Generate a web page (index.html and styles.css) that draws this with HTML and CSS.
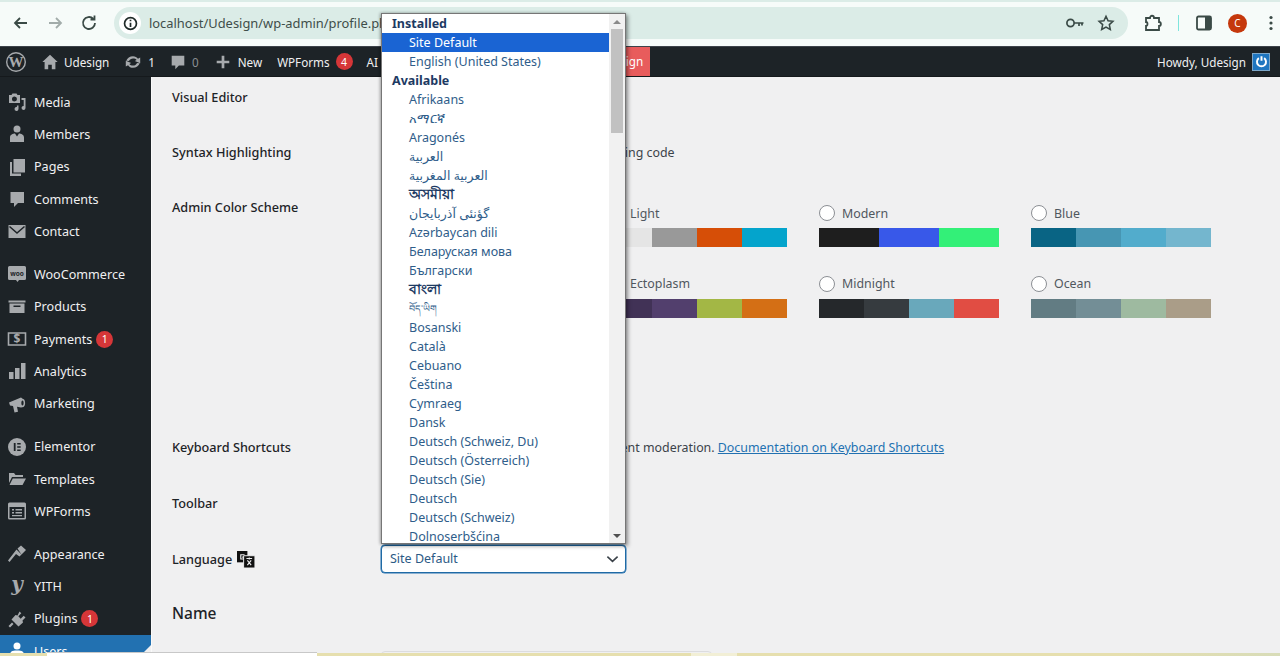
FILE: index.html
```html
<!DOCTYPE html>
<html lang="en">
<head>
<meta charset="utf-8">
<title>Profile</title>
<link rel="stylesheet" href="styles.css">
</head>
<body>
<div class="app">
  <header class="chrome">
    <div class="tabline"></div>
    <div class="toolbar">
      <svg class="nav" viewBox="0 0 20 20"><path d="M16 10H4M9 5l-5 5 5 5"/></svg>
      <svg class="nav nav-off" viewBox="0 0 20 20"><path d="M4 10h12M11 5l5 5-5 5"/></svg>
      <svg class="nav" viewBox="0 0 20 20"><path d="M16 10a6 6 0 1 1-1.8-4.3M15.5 2.5v4h-4"/></svg>
      <div class="omnibox">
        <span class="infochip"><svg viewBox="0 0 20 20"><circle cx="10" cy="10" r="7"/><path d="M10 9.2v5M10 5.6v1.8"/></svg></span>
        <span class="url">localhost/Udesign/wp-admin/profile.php?wp_http_referer</span>
        <svg class="omni-ic key" viewBox="0 0 20 20"><circle cx="5.5" cy="10" r="3.6"/><path d="M9 10h9.5M14 10v3M17 10v2.5"/></svg>
        <svg class="omni-ic star" viewBox="0 0 20 20"><path d="M10 2.5l2.3 5 5.4.6-4 3.7 1.1 5.4-4.800-2.700-4.800 2.700 1.100-5.400-4-3.700 5.400-.6z"/></svg>
      </div>
      <svg class="tool puzzle" viewBox="0 0 20 20"><path d="M3 5h4c0-3 4-3 4 0h5v4c2.500 0 2.500 4 0 4v4H3v-4c0 0 1.500 0 1.500-2S3 9 3 9z"/></svg>
      <span class="divider"></span>
      <svg class="tool panel" viewBox="0 0 20 20"><rect x="3" y="3.500" width="14" height="13" rx="1.500"/><path class="panel-fill" d="M11 3.500h6v13h-6z"/></svg>
      <span class="avatar">C</span>
      <svg class="tool dots" viewBox="0 0 6 20"><circle cx="3" cy="4.500" r="1.600"/><circle cx="3" cy="10" r="1.600"/><circle cx="3" cy="15.500" r="1.600"/></svg>
    </div>
  </header>

  <nav class="adminbar">
    <svg class="ab-wp" viewBox="0 0 20 20"><circle cx="10" cy="10" r="10"/><circle class="ab-wp-ring" cx="10" cy="10" r="8.600"/><text x="10" y="15" text-anchor="middle">W</text></svg>
    <svg class="ab-ic ab-home" viewBox="0 0 20 20"><path d="M10 2l8.500 8H16v8h-4v-5H8v5H4v-8H1.500z"/></svg>
    <span class="ab-text ab-site">Udesign</span>
    <svg class="ab-ic ab-upd" viewBox="0 0 20 20"><path d="M10 3.500c2.400 0 4.400 1.200 5.500 3l2.500-1.500v6.500l-6-2.500 2-1.200C13.300 6.500 11.800 6 10 6 8 6 6.300 7.200 5.500 9L2.500 8.500C3.600 5.500 6.500 3.500 10 3.500zM10 16.500c-2.400 0-4.400-1.200-5.500-3L2 15V8.500l6 2.500-2 1.200c.7 1.300 2.200 1.800 4 1.800 2 0 3.700-1.200 4.500-3l3 .5c-1.100 3-4 5-7.500 5z"/></svg>
    <span class="ab-text ab-num">1</span>
    <svg class="ab-ic ab-cmt" viewBox="0 0 20 20"><path d="M3 3h14v11h-6l-4 4v-4H3z"/></svg>
    <span class="ab-text ab-zero">0</span>
    <svg class="ab-ic ab-plus" viewBox="0 0 20 20"><path d="M8.500 3h3v5.500H17v3h-5.500V17h-3v-5.500H3v-3h5.500z"/></svg>
    <span class="ab-text ab-new">New</span>
    <span class="ab-text ab-forms">WPForms</span>
    <span class="badge ab-badge">4</span>
    <span class="ab-text ab-ai">AI Engine</span>
    <span class="ab-text ab-red">Udesign</span>
    <span class="ab-text ab-howdy">Howdy, Udesign</span>
    <span class="ab-power"><svg viewBox="0 0 20 20"><path d="M6.500 5.500a6 6 0 1 0 7 0M10 3v6"/></svg></span>
  </nav>

  <div class="workspace">
    <aside class="sidebar">
      <a class="item"><svg class="ic" viewBox="0 0 20 20"><path fill-rule="evenodd" d="M2 3h2.500l1-1.500h4L10.500 3H13v8H2zM7.500 4.500a2.500 2.500 0 1 0 0 5 2.500 2.500 0 0 0 0-5z"/><path d="M18.500 6v10a2 2 0 1 1-1.800-2V8H14.500V6zM11.500 13.500v3.500a2 2 0 1 1-1.600-2v-1.500z"/></svg>Media</a>
      <a class="item"><svg class="ic" viewBox="0 0 20 20"><circle cx="10" cy="5" r="3.500"/><path d="M3 18v-4.500C3 10.500 6 9.500 8 9.500l2 3 2-3c2 0 5 1 5 4V18z"/></svg>Members</a>
      <a class="item"><svg class="ic" viewBox="0 0 20 20"><path d="M6.500 2H18v13.500H6.500zM3 5h2v11.500h9V19H3z"/></svg>Pages</a>
      <a class="item"><svg class="ic" viewBox="0 0 20 20"><path d="M3.500 3h13.500v11h-6l-4 4v-4H3.500z"/></svg>Comments</a>
      <a class="item"><svg class="ic" viewBox="0 0 20 20"><path d="M1.500 4h17v13h-17z"/><path class="ic-cut" d="M2.500 5.500L10 12l7.500-6.500"/></svg>Contact</a>

      <a class="item sep"><svg class="ic" viewBox="0 0 20 20"><path d="M2.500 2h15A1.500 1.500 0 0 1 19 3.500v11a1.500 1.500 0 0 1-1.500 1.500H12l-1.500 2-1.500-2H2.500A1.500 1.500 0 0 1 1 14.500v-11A1.500 1.500 0 0 1 2.500 2z"/><text class="ic-woo" x="10" y="11.500" text-anchor="middle">woo</text></svg>WooCommerce</a>
      <a class="item"><svg class="ic" viewBox="0 0 20 20"><path d="M1.500 3.500h17v2h-17z"/><path fill-rule="evenodd" d="M2.500 6.500h15V16h-15zM6.500 8.500v1.500h7V8.500z"/></svg>Products</a>
      <a class="item"><svg class="ic" viewBox="0 0 20 20"><path class="ic-line" d="M1.500 4h17v12h-17z"/><text class="ic-dollar" x="10" y="14" text-anchor="middle">$</text></svg>Payments<span class="badge">1</span></a>
      <a class="item"><svg class="ic" viewBox="0 0 20 20"><path d="M2 11h4.500v7H2zM8 7h4.500v11H8zM14 2h4.500v16H14z"/></svg>Analytics</a>
      <a class="item"><svg class="ic" viewBox="0 0 20 20"><path fill-rule="evenodd" d="M2 8.500L14 3.500l2 1.500c2.500 0 3 7 .5 8L14 13.500l-4 -.7 1 5-3.500.7L6 12l-3-.5zM15.500 6.500c-1.500 0-1.500 5 0 5s1.500-5 0-5z"/></svg>Marketing</a>

      <a class="item sep"><svg class="ic" viewBox="0 0 20 20"><circle cx="10" cy="10" r="9"/><path class="ic-dark" d="M6.800 6h1.800v8H6.800zM10.200 6h3.500v1.600h-3.500zM10.200 9.200h3.500v1.600h-3.500zM10.200 12.400h3.500V14h-3.500z"/></svg>Elementor</a>
      <a class="item"><svg class="ic" viewBox="0 0 20 20"><path d="M2 4h5l1.500 2H16v2H5l-3 6zM5.800 9.500H19L15.500 16H2.500z"/></svg>Templates</a>
      <a class="item"><svg class="ic" viewBox="0 0 20 20"><path fill-rule="evenodd" d="M2.500 1.500h15a1.500 1.500 0 0 1 1.500 1.500v14a1.500 1.500 0 0 1-1.500 1.500h-15A1.500 1.500 0 0 1 1 17V3a1.500 1.500 0 0 1 1.500-1.500zM2.500 6v11h15V6zM5 8h2v1.500H5zM8.500 8H15v1.500H8.500zM5 11h2v1.500H5zM8.500 11H15v1.500H8.500zM5 14h10v1.200H5z"/></svg>WPForms</a>

      <a class="item sep"><svg class="ic" viewBox="0 0 20 20"><path d="M10.500 4.500L14 1.500l5 4.500-4.500 4.500zM9.500 5.500l5 5-2 2L9 10l-6.500 8L1 16.500z"/></svg>Appearance</a>
      <a class="item"><svg class="ic" viewBox="0 0 20 20"><text class="ic-yith" x="10" y="14" text-anchor="middle">y</text></svg>YITH</a>
      <a class="item"><svg class="ic" viewBox="0 0 20 20"><path d="M12.500 2.500l1.800 1.800-3 3 2.400 2.400 3-3 1.800 1.800-3 3 .5 2-4.500 4-7-7 4-4.500 2 .5zM5 13.500l1.500 1.500L3 18.500 1.500 17z"/></svg>Plugins<span class="badge">1</span></a>
      <a class="item item-current"><svg class="ic" viewBox="0 0 20 20"><circle cx="10" cy="5" r="3.500"/><path d="M3 18v-4.500C3 10.500 6 9.500 8 9.500h4c2 0 5 1 5 4V18z"/></svg>Users<i class="notch"></i></a>
    </aside>

    <main class="content">
      <div class="row row-editor">
        <div class="label">Visual Editor</div>
        <label class="check"><span class="box"></span>Disable the visual editor when writing</label>
      </div>
      <div class="row row-syntax">
        <div class="label">Syntax Highlighting</div>
        <label class="check"><span class="box"></span>Disable syntax highlighting when editing code</label>
      </div>
      <div class="row row-scheme">
        <div class="label">Admin Color Scheme</div>
        <div class="schemes">
          <div class="scheme"><div class="scheme-name"><span class="radio"></span>Default</div><div class="swatches"><i class="s-1d2327"></i><i class="s-2c3338"></i><i class="s-2271b1"></i><i class="s-72aee6"></i></div></div>
          <div class="scheme"><div class="scheme-name"><span class="radio"></span>Light</div><div class="swatches"><i class="s-e5e5e5"></i><i class="s-999"></i><i class="s-d64e07"></i><i class="s-04a4cc"></i></div></div>
          <div class="scheme"><div class="scheme-name"><span class="radio"></span>Modern</div><div class="swatches"><i class="s-1e1e1e"></i><i class="s-3858e9"></i><i class="s-33f078"></i></div></div>
          <div class="scheme"><div class="scheme-name"><span class="radio"></span>Blue</div><div class="swatches"><i class="s-096484"></i><i class="s-4796b3"></i><i class="s-52accc"></i><i class="s-74b6ce"></i></div></div>
          <div class="scheme"><div class="scheme-name"><span class="radio"></span>Coffee</div><div class="swatches"><i class="s-46403c"></i><i class="s-59524c"></i><i class="s-c7a589"></i><i class="s-9ea476"></i></div></div>
          <div class="scheme"><div class="scheme-name"><span class="radio"></span>Ectoplasm</div><div class="swatches"><i class="s-413256"></i><i class="s-523f6d"></i><i class="s-a3b745"></i><i class="s-d46f15"></i></div></div>
          <div class="scheme"><div class="scheme-name"><span class="radio"></span>Midnight</div><div class="swatches"><i class="s-25282b"></i><i class="s-363b3f"></i><i class="s-69a8bb"></i><i class="s-e14d43"></i></div></div>
          <div class="scheme"><div class="scheme-name"><span class="radio"></span>Ocean</div><div class="swatches"><i class="s-627c83"></i><i class="s-738e96"></i><i class="s-9ebaa0"></i><i class="s-aa9d88"></i></div></div>
        </div>
      </div>
      <div class="row row-keys">
        <div class="label">Keyboard Shortcuts</div>
        <label class="check"><span class="box"></span>Enable keyboard shortcuts for comment moderation.&nbsp;<a class="doc">Documentation on Keyboard Shortcuts</a></label>
      </div>
      <div class="row row-toolbar">
        <div class="label">Toolbar</div>
        <label class="check"><span class="box"></span>Show Toolbar when viewing site</label>
      </div>
      <div class="row row-lang">
        <div class="label label-lang">Language
          <svg class="lang-ic" viewBox="0 0 20 18"><path d="M1 0h11v12H1z"/><path class="lang-cut" d="M9 4H5v4.500h3V6.500H6.500"/><path d="M8 5h12v13H8z" class="lang-back"/><path class="lang-cut" d="M11 8h6M14 7v2M12 15l4-5M16 15l-4-5"/></svg>
        </div>
        <div class="select-wrap">
          <div class="listbox">
            <ul class="options">
              <li class="group">Installed</li>
              <li class="selected">Site Default</li>
              <li>English (United States)</li>
              <li class="group">Available</li>
              <li>Afrikaans</li>
              <li>አማርኛ</li>
              <li>Aragonés</li>
              <li>العربية</li>
              <li>العربية المغربية</li>
              <li class="script-dark">অসমীয়া</li>
              <li>گؤنئی آذربایجان</li>
              <li>Azərbaycan dili</li>
              <li>Беларуская мова</li>
              <li>Български</li>
              <li class="script-dark">বাংলা</li>
              <li class="script-small">བོད་ཡིག</li>
              <li>Bosanski</li>
              <li>Català</li>
              <li>Cebuano</li>
              <li>Čeština</li>
              <li>Cymraeg</li>
              <li>Dansk</li>
              <li>Deutsch (Schweiz, Du)</li>
              <li>Deutsch (Österreich)</li>
              <li>Deutsch (Sie)</li>
              <li>Deutsch</li>
              <li>Deutsch (Schweiz)</li>
              <li>Dolnoserbšćina</li>
            </ul>
            <div class="scrollbar">
              <span class="arrow-up"></span>
              <span class="thumb"></span>
              <span class="arrow-down"></span>
            </div>
          </div>
          <div class="select">Site Default
            <svg viewBox="0 0 14 8"><path d="M1.500 1.500L7 6.500l5.500-5"/></svg>
          </div>
        </div>
      </div>
      <h2 class="section">Name</h2>
      <div class="row row-input">
        <div class="label"></div>
        <div class="text-input"></div>
      </div>
    </main>
  </div>

  <footer class="strip">
    <span class="strip-a"></span><span class="strip-b"></span><span class="strip-c"></span><span class="strip-d"></span><span class="strip-e"></span>
  </footer>
</div>
</body>
</html>
```
FILE: styles.css
```css
* { box-sizing: border-box; }
html, body { margin: 0; padding: 0; height: 100%; overflow: hidden; }
body { font-family: "Noto Sans", "DejaVu Sans", "Liberation Sans", sans-serif; font-size: 13px; color: #1d2327; background: #f0f0f1; }
.app { width: 1280px; height: 656px; display: flex; flex-direction: column; position: relative; overflow: hidden; }

/* Browser chrome */
.chrome { height: 46px; flex: none; background: #f6fbf9; }
.tabline { height: 2px; background: #dbece7; }
.toolbar { height: 44px; display: flex; align-items: center; padding: 0 0 2px 11px; }
.nav { width: 20px; height: 20px; margin-right: 14px; fill: none; stroke: #3a4a46; stroke-width: 1.8; }
.nav-off { stroke: #a2acaa; }
.omnibox { width: 1014px; height: 32px; margin-left: 1px; border-radius: 16px; background: #dbece7; display: flex; align-items: center; padding-left: 5px; }
.infochip { width: 22px; height: 22px; border-radius: 50%; background: #fff; display: flex; align-items: center; justify-content: center; flex: none; }
.infochip svg { width: 17px; height: 17px; fill: none; stroke: #1f2a28; stroke-width: 2; }
.url { flex: 1; margin-left: 8px; font-size: 12.900px; color: #3f4e4a; white-space: nowrap; overflow: hidden; }
.omni-ic { flex: none; fill: none; stroke: #3a4a46; stroke-width: 1.7; }
.key { width: 20px; height: 20px; margin-left: 12px; }
.star { width: 18px; height: 18px; margin-left: 12px; margin-right: 13px; }
.tool { flex: none; }
.puzzle { width: 20px; height: 20px; margin-left: 15px; fill: none; stroke: #3a4a46; stroke-width: 1.800; }
.divider { width: 1px; height: 16px; margin-left: 15px; background: #7fe5dd; }
.panel { width: 20px; height: 20px; margin-left: 15px; fill: none; stroke: #3a4a46; stroke-width: 1.800; }
.panel-fill { fill: #3a4a46; stroke: none; }
.avatar { width: 19px; height: 19px; margin-left: 14px; border-radius: 50%; background: #c5380c; color: #fff; font-size: 10px; display: flex; align-items: center; justify-content: center; }
.dots { width: 6px; height: 20px; margin-left: 21px; fill: #3a4a46; }

/* Admin bar */
.adminbar { height: 31px; flex: none; background: #1d2327; border-top: 1px solid #3c434a; border-bottom: 1px solid #15191c; display: flex; align-items: center; color: #f0f0f1; }
.ab-text { white-space: nowrap; font-size: 11.700px; color: #f0f0f1; }
.ab-ic { width: 18px; height: 18px; fill: #a7aaad; flex: none; }
.ab-wp { width: 20px; height: 20px; margin-left: 6px; fill: #a7aaad; flex: none; }
.ab-wp-ring { fill: #1d2327; }
.ab-wp text { font-family: "Liberation Serif", serif; font-weight: 700; font-size: 15px; fill: #a7aaad; }
.ab-home { margin-left: 15px; }
.ab-site { margin-left: 5px; }
.ab-upd { margin-left: 15px; }
.ab-num { margin-left: 6px; }
.ab-cmt { margin-left: 14px; }
.ab-zero { margin-left: 5px; color: #8c8f94; }
.ab-plus { margin-left: 15px; }
.ab-new { margin-left: 6px; }
.ab-forms { margin-left: 15px; }
.badge { min-width: 17px; height: 17px; margin-left: 4px; border-radius: 50%; background: #d63638; color: #fff; font-size: 10.500px; display: inline-flex; align-items: center; justify-content: center; flex: none; }
.ab-badge { margin-left: 6px; }
.ab-ai { margin-left: 14px; }
.ab-red { margin-left: 172px; padding: 0 7px; height: 29px; line-height: 29px; background: #e85c5c; color: #fff; }
.ab-howdy { margin-left: auto; }
.ab-power { width: 18px; height: 18px; margin: 0 10px 0 6px; background: #1f76c0; border: 1px solid #7da7c9; display: flex; align-items: center; justify-content: center; }
.ab-power svg { width: 15px; height: 15px; fill: none; stroke: #fff; stroke-width: 2.600; }

/* Layout */
.workspace { flex: 1; display: flex; min-height: 0; }
.sidebar { width: 151px; flex: none; background: #1d2327; padding-top: 9px; overflow: hidden; }
.item { height: 32.300px; display: flex; align-items: center; padding-left: 7px; color: #f0f0f1; font-size: 12.600px; white-space: nowrap; position: relative; }
.sep { margin-top: 10.800px; }
.ic { width: 20px; height: 20px; margin-right: 7px; fill: #a7aaad; flex: none; }
.ic-cut { fill: none; stroke: #1d2327; stroke-width: 1.500; }
.ic-dark { fill: #1d2327; }
.ic-line { fill: none; stroke: #a7aaad; stroke-width: 1.600; }
.ic-woo { font-size: 6.500px; font-weight: 700; fill: #1d2327; }
.ic-dollar { font-size: 12px; font-weight: 700; fill: #a7aaad; }
.ic-yith { font-family: "DejaVu Serif", serif; font-style: italic; font-weight: 700; font-size: 20px; fill: #a7aaad; }
.item-current { background: #2271b1; color: #fff; }
.item-current .ic { fill: #fff; }
.notch { position: absolute; right: 0; top: 10px; border: 7px solid transparent; border-right-color: #f0f0f1; border-left-width: 0; border-right-width: 7px; }

/* Content */
.content { flex: 1; padding: 10px 0 0 20px; border-left: 1px solid #fafafa; min-width: 0; }
.row { display: grid; grid-template-columns: 209px 1fr; align-items: start; }
.label { font-weight: 500; font-size: 12.700px; line-height: 20px; color: #1d2327; }
.check { display: flex; align-items: center; padding-top: 1px; line-height: 20px; font-size: 12.400px; color: #3c434a; white-space: nowrap; }
.box { width: 16px; height: 16px; margin-right: 9px; background: #fff; border: 1px solid #8c8f94; border-radius: 3px; flex: none; }
.doc { color: #2271b1; text-decoration: underline; }
.row-editor { height: 55px; }
.row-syntax { height: 55px; }
.row-scheme { height: 240px; }
.row-keys { height: 56px; }
.row-toolbar { height: 52px; }

.schemes { display: grid; grid-template-columns: repeat(4, 180px); column-gap: 32px; padding: 6px 0 0 14px; grid-auto-rows: 70.500px; }
.scheme-name { display: flex; align-items: center; height: 20px; font-size: 12.400px; color: #50575e; margin-bottom: 5px; }
.radio { width: 16px; height: 16px; margin-right: 7px; border-radius: 50%; background: #fff; border: 1px solid #8c8f94; flex: none; }
.swatches { display: flex; height: 19px; }
.swatches i { flex: 1; display: block; }
.s-1d2327 { background: #1d2327; } .s-2c3338 { background: #2c3338; } .s-2271b1 { background: #2271b1; } .s-72aee6 { background: #72aee6; }
.s-e5e5e5 { background: #e5e5e5; } .s-999 { background: #999; } .s-d64e07 { background: #d64e07; } .s-04a4cc { background: #04a4cc; }
.s-1e1e1e { background: #1e1e1e; } .s-3858e9 { background: #3858e9; } .s-33f078 { background: #33f078; }
.s-096484 { background: #096484; } .s-4796b3 { background: #4796b3; } .s-52accc { background: #52accc; } .s-74b6ce { background: #74b6ce; }
.s-46403c { background: #46403c; } .s-59524c { background: #59524c; } .s-c7a589 { background: #c7a589; } .s-9ea476 { background: #9ea476; }
.s-413256 { background: #413256; } .s-523f6d { background: #523f6d; } .s-a3b745 { background: #a3b745; } .s-d46f15 { background: #d46f15; }
.s-25282b { background: #25282b; } .s-363b3f { background: #363b3f; } .s-69a8bb { background: #69a8bb; } .s-e14d43 { background: #e14d43; }
.s-627c83 { background: #627c83; } .s-738e96 { background: #738e96; } .s-9ebaa0 { background: #9ebaa0; } .s-aa9d88 { background: #aa9d88; }

/* Language select */
.row-lang { align-items: center; height: 28px; }
.label-lang { display: flex; align-items: center; gap: 4px; }
.lang-ic { width: 19px; height: 17px; fill: #111; }
.lang-back { fill: #111; stroke: #f0f0f1; stroke-width: 1; }
.lang-cut { fill: none; stroke: #f0f0f1; stroke-width: 1.200; }
.select-wrap { position: relative; width: 245px; }
.select { height: 28px; background: #fff; border: 1.500px solid #1f6aa5; border-radius: 4px; box-shadow: 0 0 0 .5px #2271b1; padding-left: 8px; line-height: 25px; font-size: 12.500px; color: #2c5a85; position: relative; }
.select svg { position: absolute; right: 6px; top: 9px; width: 13px; height: 8px; fill: none; stroke: #3a4148; stroke-width: 1.700; }
.listbox { position: absolute; left: 0; bottom: 100%; margin-bottom: 1px; width: 245px; height: 531px; background: #fff; border: 1px solid #767676; box-shadow: 2px 2px 4px rgba(0, 0, 0, .4), -1px 0 3px rgba(0, 0, 0, .3); display: flex; overflow: hidden; z-index: 5; }
.options { list-style: none; margin: 0; padding: 0; width: 227px; flex: none; overflow: hidden; }
.options li { height: 19px; line-height: 19px; padding-left: 27px; font-size: 12.500px; color: #2f5d8a; white-space: nowrap; text-align: left; overflow: hidden; }
.options .group { padding-left: 10px; font-weight: 700; color: #1d3a63; }
.options .selected { background: #1a64d3; color: #fff; }
.options .script-dark { color: #1d3a63; font-weight: 700; font-size: 13.500px; }
.options .script-small { font-size: 9.500px; }
.scrollbar { flex: 1; background: #f1f1f1; position: relative; }
.thumb { position: absolute; left: 2px; right: 2px; top: 15px; height: 104px; background: #c1c1c1; }
.arrow-up, .arrow-down { position: absolute; left: 4px; border: 4px solid transparent; border-top-width: 0; border-bottom-color: #8a8a8a; }
.arrow-up { top: 6px; }
.arrow-down { bottom: 5px; border-width: 4px 4px 0; border-color: #505050 transparent transparent; }

/* Name section */
.section { margin: 30px 0 0; font-size: 15.500px; line-height: 20px; font-weight: 500; color: #1d2327; }
.row-input { margin-top: 28px; }
.text-input { width: 331px; height: 28px; background: #f0f0f1; border: 1px solid #dcdcde; border-radius: 4px; }

/* Bottom strip */
.strip { height: 3px; flex: none; display: flex; position: relative; z-index: 2; }
.strip span { display: block; height: 100%; background: #e6dfae; }
.strip-a { width: 47px; }
.strip-b { width: 270px; background: #fff !important; box-shadow: 0 -1px 0 #c8c8c8; }
.strip-c { width: 374px; }
.strip-d { width: 46px; background: #f2efd6 !important; }
.strip-e { flex: 1; background: linear-gradient(90deg, #e6dfae 70%, #d8dcb8) !important; }
```
